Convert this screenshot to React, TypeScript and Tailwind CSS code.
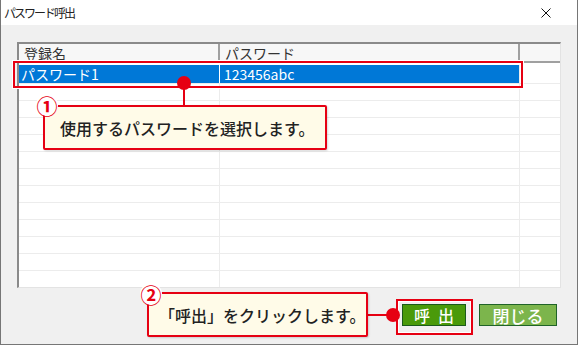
import React from "react";

const RED = "bg-[#e60012]";

export default function App() {
  const rows = Array.from({ length: 13 });
  return (
    <div className="relative w-[580px] h-[346px] bg-white overflow-hidden font-['Noto_Sans_CJK_JP',sans-serif] text-[#1a1a1a]">
      {/* window */}
      <div className="w-[578px] h-[345px] border-l border-r border-b border-[#767676] flex flex-col">
        {/* title bar */}
        <div className="h-[25px] bg-white flex items-center justify-between pl-[3px] pr-[26px] shrink-0">
          <span className="text-[12px] tracking-[-2px] leading-none text-[#222]">パスワード呼出</span>
          <svg width="10" height="10" viewBox="0 0 10 10">
            <path d="M0.5 0.5 L9.5 9.5 M9.5 0.5 L0.5 9.5" stroke="#111" strokeWidth="1" />
          </svg>
        </div>
        {/* body */}
        <div className="flex-1 bg-[#f0f0f0] px-[16px] pt-[17px] flex flex-col">
          {/* list view */}
          <div className="h-[246px] bg-white border-l-2 border-t-2 border-[#8a8a8a] border-r border-b border-r-[#e3e3e3] border-b-[#e3e3e3] overflow-hidden flex flex-col">
            {/* header */}
            <div className="h-[19px] shrink-0 flex border-b-2 border-[#a0a0a0] bg-[#f7f7f7] text-[14px] leading-none text-[#333]">
              <div className="w-[201px] border-r-2 border-[#a0a0a0] pl-[5px] flex items-center">登録名</div>
              <div className="w-[300px] border-r-2 border-[#a0a0a0] pl-[5px] flex items-center">パスワード</div>
              <div className="flex-1" />
            </div>
            <div className="pt-[2px] flex flex-col">
              {/* selected row */}
              <div className="h-[19px] shrink-0 flex border-b border-[#ececec] text-[14px] leading-none">
                <div className="w-[201px] relative flex">
                  <div className="w-[200px] bg-[#0078d7] text-white pl-[2px] flex items-center">パスワード1</div>
                  <div className="w-px bg-white" />
                </div>
                <div className="w-[300px] bg-[#0078d7] text-white pl-[4px] flex items-center border-r border-[#ececec]">
                  123456abc
                </div>
                <div className="flex-1" />
              </div>
              {rows.map((_, i) => (
                <div key={i} className="h-[17px] shrink-0 flex border-b border-[#ececec]">
                  <div className="w-[201px] border-r border-[#ececec]" />
                  <div className="w-[300px] border-r border-[#ececec]" />
                  <div className="flex-1" />
                </div>
              ))}
            </div>
          </div>
          {/* buttons */}
          <div className="mt-[16px] flex justify-end gap-[13px] mr-[4px]">
            <div className="w-[64px] h-[22px] bg-[#4a9a0a] border border-[#1b5a1b] text-white text-[16px] font-medium leading-none flex items-center justify-center gap-[8px]">
              <span>呼</span>
              <span>出</span>
            </div>
            <div className="w-[78px] h-[22px] bg-[#7cb54c] border border-[#1f6328] text-white text-[17px] font-medium leading-none flex items-center justify-center">
              閉じる
            </div>
          </div>
        </div>
      </div>

      {/* selection highlight */}
      <div className="absolute left-[13px] top-[61px] w-[510px] h-[27px] border-2 border-[#e60012] shadow-[0_0_0_1px_white]" />

      {/* callout 1 connector */}
      <div className={`absolute left-[183px] top-[83px] w-[2px] h-[23px] ${RED}`} />
      <div className={`absolute left-[177px] top-[76px] w-[14px] h-[14px] rounded-full ${RED}`} />
      {/* callout 1 */}
      <div className="absolute left-[43px] top-[105px] w-[284px] h-[45px] border-2 border-[#e60012] bg-[#fffbe8] rounded-[2px] shadow-[1px_1px_2px_rgba(0,0,0,0.15)] flex items-center pl-[15px] text-[16px] font-medium text-[#222]">
        使用するパスワードを選択します。
      </div>
      <div className="absolute left-[36px] top-[94px] w-[22px] h-[22px] rounded-full bg-white flex items-center justify-center text-[#e60012] text-[21px] font-bold leading-none">
        ①
      </div>

      {/* 呼出 highlight */}
      <div className="absolute left-[396px] top-[299px] w-[77px] h-[36px] border-2 border-[#e60012] shadow-[inset_0_0_0_1px_white]" />
      {/* callout 2 connector */}
      <div className={`absolute left-[367px] top-[314px] w-[26px] h-[2px] ${RED}`} />
      <div className={`absolute left-[386px] top-[308px] w-[14px] h-[14px] rounded-full ${RED}`} />
      {/* callout 2 */}
      <div className="absolute left-[147px] top-[292px] w-[221px] h-[45px] border-2 border-[#e60012] bg-[#fffbe8] rounded-[2px] shadow-[1px_1px_2px_rgba(0,0,0,0.15)] flex items-center pl-[10px] text-[16px] font-medium text-[#222]">
        「呼出」をクリックします。
      </div>
      <div className="absolute left-[140px] top-[283px] w-[22px] h-[22px] rounded-full bg-white flex items-center justify-center text-[#e60012] text-[21px] font-bold leading-none">
        ②
      </div>
    </div>
  );
}
